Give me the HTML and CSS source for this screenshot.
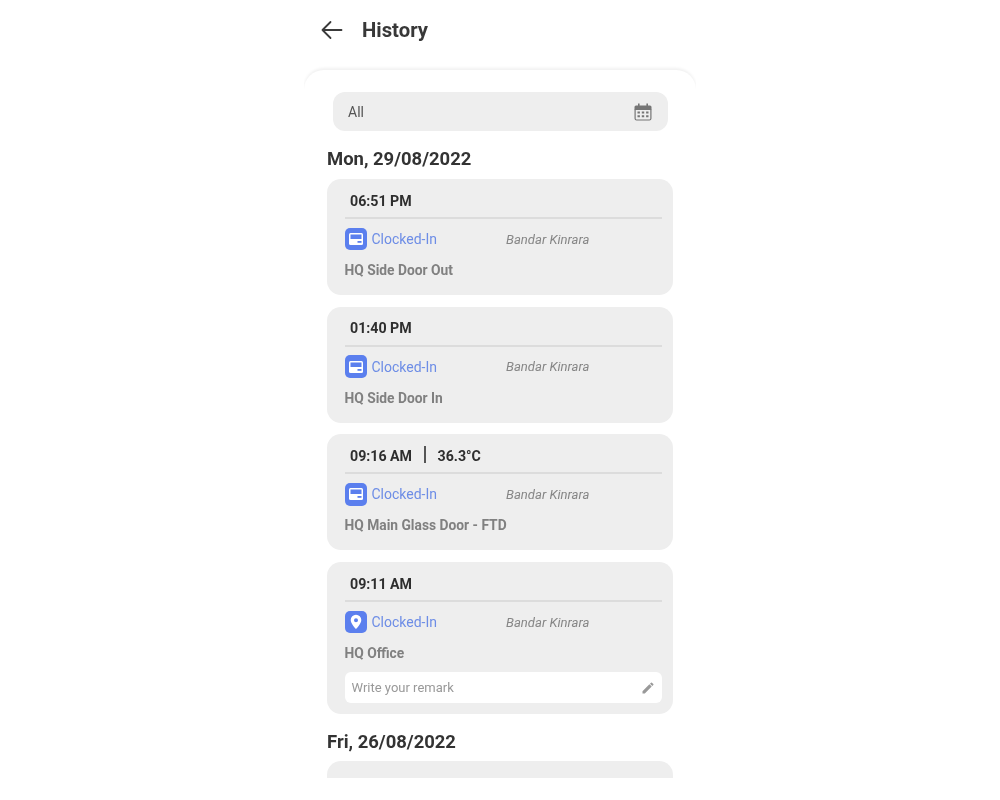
FILE: index.html
```html
<!DOCTYPE html>
<html lang="en">
<head>
<meta charset="utf-8">
<title>History</title>
<link rel="stylesheet" href="styles.css">
</head>
<body>
<main class="screen">
  <header class="topbar">
    <svg class="back" width="24" height="20" viewBox="0 0 24 20" fill="none" stroke="#3a3a3a" stroke-width="1.8" stroke-linecap="round" stroke-linejoin="round"><path d="M21.500 10H2.500M10.500 2 2.500 10l8 8"/></svg>
    <h1 class="title">History</h1>
  </header>
  <section class="sheet">
    <div class="filter">
      <span>All</span>
      <svg width="20" height="20" viewBox="0 0 20 20"><path fill="#757575" d="M5 1.500h1.600v2H13.400v-2H15v2h2a1.500 1.500 0 0 1 1.500 1.500v2.500h-17V5A1.500 1.500 0 0 1 3 3.500h2z"/><path fill="none" stroke="#757575" stroke-width="1.200" d="M2.100 7.500h15.800v9a1.500 1.500 0 0 1-1.500 1.500H3.600a1.500 1.500 0 0 1-1.500-1.500z"/><path fill="#757575" d="M4.500 9.500h2.400v2H4.500zM8.800 9.500h2.400v2H8.800zM13.100 9.500h2.400v2h-2.400zM4.500 13.300h2.400v2H4.500zM8.800 13.300h2.400v2H8.800zM13.100 13.300h2.400v2h-2.400z"/></svg>
    </div>

    <h2 class="date">Mon, 29/08/2022</h2>

    <article class="card">
      <div class="time"><span>06:51 PM</span></div>
      <div class="status">
        <span class="badge"><svg width="16" height="16" viewBox="0 0 16 16"><rect x="1" y="2" width="14" height="12" rx="1.500" fill="#fff"/><rect x="2.500" y="3.500" width="11" height="4.500" fill="#5b7fee"/><rect x="9.500" y="10" width="4" height="1.800" fill="#5b7fee"/></svg></span>
        <span class="state">Clocked-In</span>
        <span class="place">Bandar Kinrara</span>
      </div>
      <p class="name">HQ Side Door Out</p>
    </article>

    <article class="card">
      <div class="time"><span>01:40 PM</span></div>
      <div class="status">
        <span class="badge"><svg width="16" height="16" viewBox="0 0 16 16"><rect x="1" y="2" width="14" height="12" rx="1.500" fill="#fff"/><rect x="2.500" y="3.500" width="11" height="4.500" fill="#5b7fee"/><rect x="9.500" y="10" width="4" height="1.800" fill="#5b7fee"/></svg></span>
        <span class="state">Clocked-In</span>
        <span class="place">Bandar Kinrara</span>
      </div>
      <p class="name">HQ Side Door In</p>
    </article>

    <article class="card">
      <div class="time"><span>09:16 AM</span><i class="sep"></i><span>36.3°C</span></div>
      <div class="status">
        <span class="badge"><svg width="16" height="16" viewBox="0 0 16 16"><rect x="1" y="2" width="14" height="12" rx="1.500" fill="#fff"/><rect x="2.500" y="3.500" width="11" height="4.500" fill="#5b7fee"/><rect x="9.500" y="10" width="4" height="1.800" fill="#5b7fee"/></svg></span>
        <span class="state">Clocked-In</span>
        <span class="place">Bandar Kinrara</span>
      </div>
      <p class="name">HQ Main Glass Door - FTD</p>
    </article>

    <article class="card card-remark">
      <div class="time"><span>09:11 AM</span></div>
      <div class="status">
        <span class="badge"><svg width="16" height="16" viewBox="0 0 16 16"><path fill="#fff" fill-rule="evenodd" d="M8 .8a5.300 5.300 0 0 0-5.300 5.300c0 3.800 5.300 9.100 5.300 9.100s5.300-5.300 5.300-9.100A5.300 5.300 0 0 0 8 .8zm0 3.400a2 2 0 1 1 0 4 2 2 0 0 1 0-4z"/></svg></span>
        <span class="state">Clocked-In</span>
        <span class="place">Bandar Kinrara</span>
      </div>
      <p class="name">HQ Office</p>
      <div class="remark">
        <span>Write your remark</span>
        <svg width="14" height="14" viewBox="0 0 14 14"><path fill="#999" d="M1.500 10.200v2.300h2.300l6.900-6.900-2.300-2.300zM12.300 4a.6.6 0 0 0 0-.9l-1.400-1.400a.6.6 0 0 0-.9 0L9 2.700 11.300 5z"/></svg>
      </div>
    </article>

    <h2 class="date date-next">Fri, 26/08/2022</h2>
    <article class="card card-cut"></article>
  </section>
</main>
</body>
</html>
```

FILE: styles.css
```css
* { box-sizing: border-box; }

html, body {
  margin: 0;
  background: #fff;
}

body {
  font-family: Roboto, "Liberation Sans", sans-serif;
  color: #333;
}

.screen {
  width: 392px;
  height: 778px;
  margin: 0 auto;
  overflow: hidden;
  filter: blur(0.5px);
}

.topbar {
  height: 70px;
  display: flex;
  align-items: center;
  gap: 18px;
  padding: 0 0 10px 16px;
}

.back { flex: none; }

.title {
  margin: 0;
  font-size: 20.300px;
  font-weight: 700;
  color: #383838;
}

.sheet {
  height: 720px;
  padding: 22px 23px 0;
  border-radius: 20px 20px 0 0;
  background: #fff;
  box-shadow: 0 -2px 3px rgba(0, 0, 0, 0.06);
}

.filter {
  height: 39px;
  margin: 0 5px 0 6px;
  padding: 0 15px;
  display: flex;
  align-items: center;
  justify-content: space-between;
  border-radius: 12px;
  background: #eeeeee;
  font-size: 14px;
  color: #555;
}

.date {
  margin: 15px 0 9px;
  height: 24px;
  line-height: 27px;
  font-size: 18.450px;
  font-weight: 700;
  color: #333;
}

.date-next {
  margin-top: 15px;
  margin-bottom: 8px;
}

.card {
  padding: 0 11px 0 17.500px;
  margin-bottom: 11.700px;
  height: 116px;
  border-radius: 14px;
  background: #eeeeee;
}

.card:last-of-type { margin-bottom: 0; }

.time {
  height: 40px;
  padding: 5px 0 0 5.500px;
  display: flex;
  align-items: center;
  gap: 12px;
  border-bottom: 2px solid #dcdcdc;
  font-size: 14.200px;
  font-weight: 700;
  color: #2e2e2e;
}

.sep {
  width: 1.500px;
  height: 17px;
  margin-top: -3px;
  background: #555;
}

.status {
  height: 40px;
  display: flex;
  align-items: center;
}

.badge {
  width: 22.500px;
  height: 22.500px;
  flex: none;
  display: flex;
  align-items: center;
  justify-content: center;
  border-radius: 5px;
  background: #5b7fee;
}

.state {
  width: 139px;
  padding-left: 4.500px;
  font-size: 14px;
  color: #6d8de6;
}

.place {
  font-size: 13.100px;
  font-style: italic;
  color: #868686;
}

.name {
  margin: 1px 0 0;
  font-size: 13.800px;
  font-weight: 700;
  color: #808080;
  line-height: 20px;
}

.card-remark { height: 152px; }

.remark {
  height: 31px;
  margin-top: 9px;
  padding: 0 7px;
  display: flex;
  align-items: center;
  justify-content: space-between;
  border-radius: 6px;
  background: #fff;
  font-size: 13px;
  color: #999;
}

.card-cut { height: 60px; }
```
